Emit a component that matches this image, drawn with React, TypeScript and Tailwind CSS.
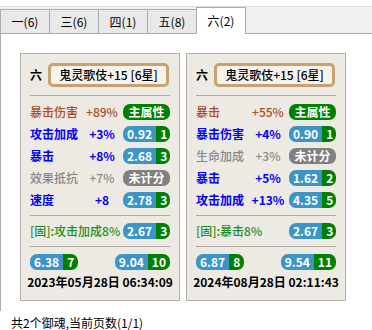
import React from "react";

const FONT = { fontFamily: '"Noto Sans CJK SC", "Noto Sans", sans-serif' };

type Row = {
  label: string;
  value: string;
  kind: "main" | "blue" | "gray";
  score?: string;
  count?: string;
};

type Card = {
  name: string;
  rows: Row[];
  fixed: string;
  fixedScore: string;
  fixedCount: string;
  b1: [string, string];
  b2: [string, string];
  date: string;
};

const cards: Card[] = [
  {
    name: "鬼灵歌伎+15 [6星]",
    rows: [
      { label: "暴击伤害", value: "+89%", kind: "main" },
      { label: "攻击加成", value: "+3%", kind: "blue", score: "0.92", count: "1" },
      { label: "暴击", value: "+8%", kind: "blue", score: "2.68", count: "3" },
      { label: "效果抵抗", value: "+7%", kind: "gray" },
      { label: "速度", value: "+8", kind: "blue", score: "2.78", count: "3" },
    ],
    fixed: "[固]:攻击加成8%",
    fixedScore: "2.67",
    fixedCount: "3",
    b1: ["6.38", "7"],
    b2: ["9.04", "10"],
    date: "2023年05月28日 06:34:09",
  },
  {
    name: "鬼灵歌伎+15 [6星]",
    rows: [
      { label: "暴击", value: "+55%", kind: "main" },
      { label: "暴击伤害", value: "+4%", kind: "blue", score: "0.90", count: "1" },
      { label: "生命加成", value: "+3%", kind: "gray" },
      { label: "暴击", value: "+5%", kind: "blue", score: "1.62", count: "2" },
      { label: "攻击加成", value: "+13%", kind: "blue", score: "4.35", count: "5" },
    ],
    fixed: "[固]:暴击8%",
    fixedScore: "2.67",
    fixedCount: "3",
    b1: ["6.87", "8"],
    b2: ["9.54", "11"],
    date: "2024年08月28日 02:11:43",
  },
];

function ScoreBadge({ score, count, full }: { score: string; count: string; full?: boolean }) {
  return (
    <div
      className={
        "flex h-[16px] rounded-[7px] overflow-hidden text-white font-bold text-[12px] leading-[16px] " +
        (full ? "w-[47px]" : "")
      }
    >
      <div className={"bg-[#3b95c8] text-center px-[4px] " + (full ? "flex-1" : "")}>{score}</div>
      <div className="bg-[#008000] text-center px-[4px]">{count}</div>
    </div>
  );
}

function TextBadge({ text, color }: { text: string; color: string }) {
  return (
    <div
      className={
        "w-[47px] h-[16px] rounded-[7px] text-white font-bold text-[12px] leading-[16px] text-center " + color
      }
    >
      {text}
    </div>
  );
}

function StatRow({ r }: { r: Row }) {
  const color =
    r.kind === "main"
      ? "text-[#b04a22] font-medium"
      : r.kind === "blue"
      ? "text-[#0000ff] font-bold"
      : "text-[#888888] font-medium";
  return (
    <div className="flex items-center h-[22px] text-[12px] leading-[16px]">
      <div className={"w-[51px] whitespace-nowrap " + color}>{r.label}</div>
      <div className={"w-[42px] text-center whitespace-nowrap " + color}>{r.value}</div>
      {r.kind === "main" ? (
        <TextBadge text="主属性" color="bg-[#008000]" />
      ) : r.kind === "gray" ? (
        <TextBadge text="未计分" color="bg-[#808080]" />
      ) : (
        <ScoreBadge score={r.score!} count={r.count!} full />
      )}
    </div>
  );
}

function CardView({ c }: { c: Card }) {
  return (
    <div className="w-[160px] h-[248px] bg-[#ede9e3] border border-[#b3afab] px-[9px] pt-[9px] flex flex-col">
      <div className="flex items-center h-[24px]">
        <div className="w-[18px] text-[12px] font-bold text-black leading-[16px]">六</div>
        <div className="w-[121px] h-[24px] border-[3px] border-[#c9a171] rounded-[5px] bg-[#f6f3ef] flex items-center justify-center text-[12px] leading-[16px] font-medium text-black whitespace-nowrap">
          {c.name}
        </div>
      </div>
      <div className="mt-[8px] h-px bg-[#aca8a4]" />
      <div className="mt-[5px]">
        {c.rows.map((r, i) => (
          <StatRow key={i} r={r} />
        ))}
      </div>
      <div className="mt-[4px] h-px bg-[#aca8a4]" />
      <div className="mt-[4px] flex items-center h-[22px] text-[12px] leading-[16px]">
        <div className="w-[93px] whitespace-nowrap text-[#1f8f26] font-medium">{c.fixed}</div>
        <ScoreBadge score={c.fixedScore} count={c.fixedCount} full />
      </div>
      <div className="mt-[4px] h-px bg-[#aca8a4]" />
      <div className="mt-[4px] flex items-center justify-between h-[22px]">
        <ScoreBadge score={c.b1[0]} count={c.b1[1]} />
        <ScoreBadge score={c.b2[0]} count={c.b2[1]} />
      </div>
      <div className="h-[18px] flex items-center justify-center text-[12px] leading-[16px] font-bold text-black whitespace-nowrap">
        {c.date}
      </div>
    </div>
  );
}

const tabs = ["一(6)", "三(6)", "四(1)", "五(8)"];

export default function App() {
  return (
    <div className="w-[372px] h-[330px] bg-white overflow-hidden" style={FONT}>
      <div className="h-[6px]" />
      <div className="flex items-end h-[28px] bg-[#f0f0f0] border-t border-t-[#dadada] border-b border-b-[#acacac]">
        {tabs.map((t) => (
          <div
            key={t}
            className="w-[49px] h-[24px] border-l border-t border-[#acacac] bg-[#e9e9e9] flex items-center justify-center text-[12px] leading-[16px] text-black"
          >
            {t}
          </div>
        ))}
        <div className="w-[50px] h-[27px] -mb-px border-l border-r border-t border-[#acacac] bg-white flex items-center justify-center text-[12px] leading-[16px] text-black relative z-10">
          六(2)
        </div>
      </div>
      <div className="h-[277px] border-l border-[#acacac] pl-[19px] pt-[19px] flex gap-[6px]">
        {cards.map((c, i) => (
          <CardView key={i} c={c} />
        ))}
      </div>
      <div className="mt-[4px] pl-[11px] text-[12px] leading-[15px] text-black">共2个御魂,当前页数(1/1)</div>
    </div>
  );
}
